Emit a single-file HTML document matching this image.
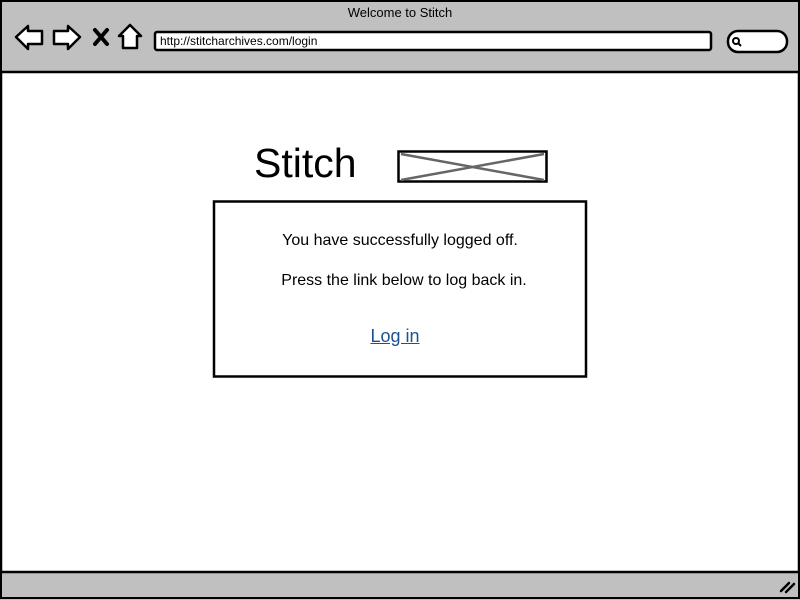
<!DOCTYPE html>
<html><head><style>
html,body{margin:0;padding:0;width:800px;height:600px;overflow:hidden;background:#fff;font-family:"Liberation Sans",sans-serif;}
.a{position:absolute;}
</style></head><body>
<svg class="a" style="left:0;top:0" width="800" height="600">
<rect x="1" y="1" width="798" height="597" fill="#fff" stroke="#000" stroke-width="2.5"/>
<rect x="2" y="2" width="796" height="70" fill="#c0c0c0"/>
<line x1="1" y1="72" x2="799" y2="72" stroke="#000" stroke-width="2.5"/>
<rect x="2" y="573" width="796" height="24" fill="#c0c0c0"/>
<line x1="1" y1="572" x2="799" y2="572" stroke="#000" stroke-width="2.5"/>
<path d="M16 37 L28 26 L28 31 L42 31 L42 44 L28 44 L28 49 Z" fill="#fff" stroke="#000" stroke-width="2.5" stroke-linejoin="round"/>
<path d="M80 37 L68 26 L68 31 L54 31 L54 44 L68 44 L68 49 Z" fill="#fff" stroke="#000" stroke-width="2.5" stroke-linejoin="round"/>
<path d="M95 30 L107 44 M107 30 L95 44" stroke="#000" stroke-width="4" stroke-linecap="round"/>
<path d="M130 25 L141 36 L137 36 L137 48 L123 48 L123 36 L119 36 Z" fill="#fff" stroke="#000" stroke-width="2.5" stroke-linejoin="round"/>
<rect x="155" y="32" width="556" height="18" rx="2" fill="#fff" stroke="#000" stroke-width="2.5"/>
<rect x="728" y="31" width="59" height="21" rx="10" fill="#fff" stroke="#000" stroke-width="2.5"/>
<circle cx="736" cy="41" r="3" fill="none" stroke="#000" stroke-width="2"/>
<line x1="738" y1="43" x2="741" y2="46" stroke="#000" stroke-width="2"/>
<path d="M781 591 L789 583 M786 592 L794 584" stroke="#000" stroke-width="2.5" stroke-linecap="round"/>
<rect x="398.5" y="151.5" width="148" height="30" fill="#fff" stroke="#000" stroke-width="2.5"/>
<path d="M401 154 L544 180 M401 180 L544 154" stroke="#666" stroke-width="2.5"/>
<rect x="214" y="201.5" width="372" height="175" fill="#fff" stroke="#000" stroke-width="2.5"/>
</svg>
<div class="a" style="left:0;width:800px;top:5px;text-align:center;font-size:13px;">Welcome to Stitch</div>
<div class="a" style="left:160px;top:34px;font-size:12px;">http://stitcharchives.com/login</div>
<div class="a" style="left:254px;top:140px;font-size:41px;">Stitch</div>
<div class="a" style="left:214px;width:372px;top:232px;text-align:center;font-size:16px;">You have successfully logged off.</div>
<div class="a" style="left:218px;width:372px;top:272px;text-align:center;font-size:16px;">Press the link below to log back in.</div>
<div class="a" style="left:214px;width:362px;top:326px;text-align:center;font-size:18px;color:#1a5296;text-decoration:underline;">Log in</div>
</body></html>
